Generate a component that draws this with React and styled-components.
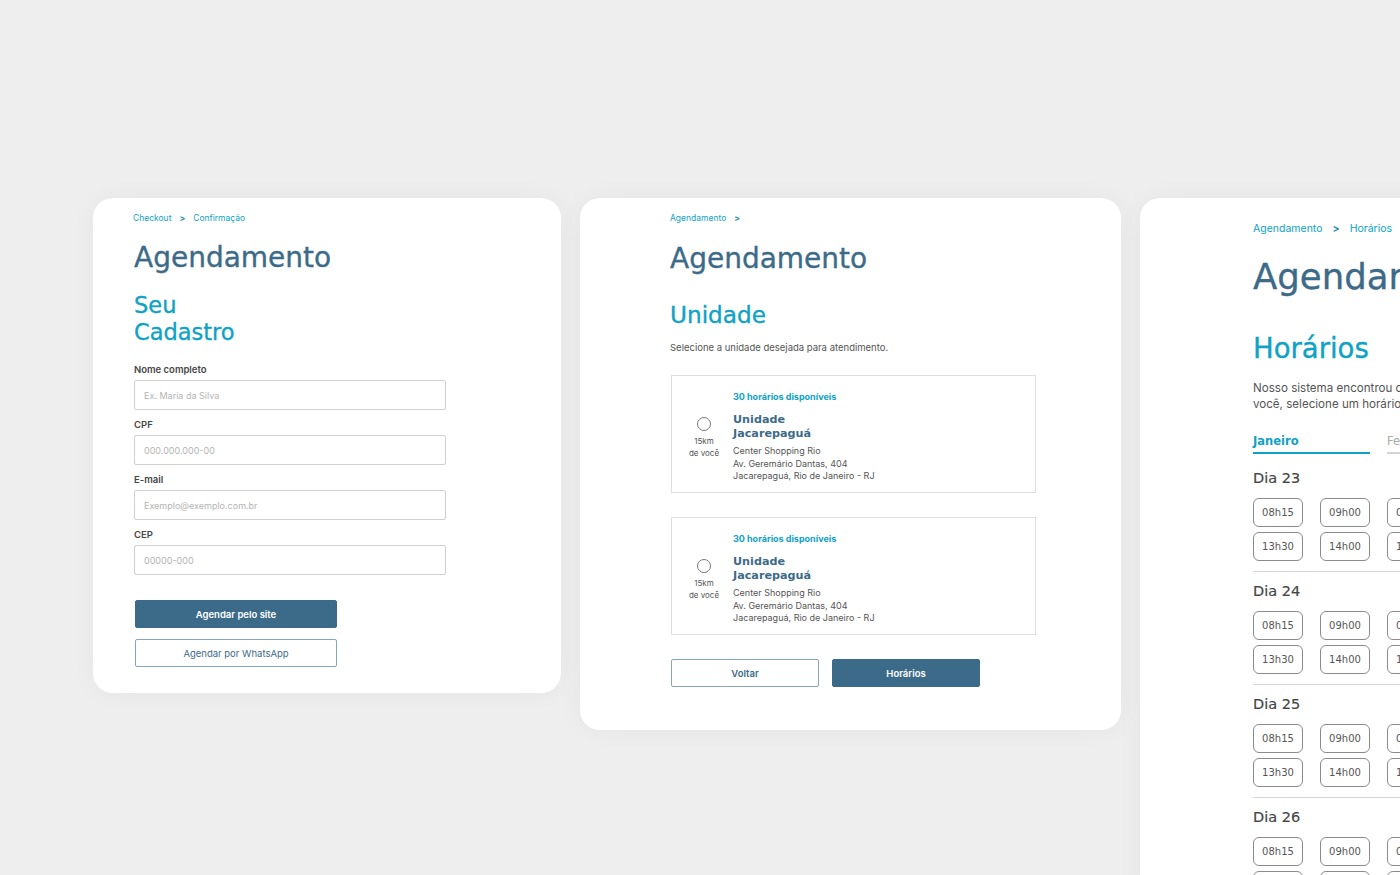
import React from "react";
import styled, { createGlobalStyle } from "styled-components";

const GlobalStyle = createGlobalStyle`
  html, body { margin: 0; padding: 0; }
  body {
    background: #eeeeee;
    overflow: hidden;
    font-family: Inter, "Liberation Sans", sans-serif;
    -webkit-font-smoothing: antialiased;
  }
`;

const DARK = "#3c6b89";
const CYAN = "#0ea2c5";
const HEAD = `"DejaVu Sans", Inter, sans-serif`;

const Page = styled.main`
  display: flex;
  align-items: flex-start;
  gap: 19px;
  padding: 198px 0 0 93px;
  width: max-content;
`;

const Card = styled.section`
  flex-shrink: 0;
  box-sizing: border-box;
  width: ${(p) => p.$w}px;
  min-height: ${(p) => p.$minH || 0}px;
  padding: ${(p) => p.$pad};
  background: #ffffff;
  border-radius: 20px;
  box-shadow: 0 0 26px rgba(0, 0, 0, 0.045);
`;

const Crumbs = styled.nav`
  display: flex;
  align-items: center;
  gap: ${(p) => p.$gap}px;
  font-size: ${(p) => p.$size}px;
  line-height: ${(p) => p.$lh}px;
  color: ${CYAN};
`;

const Sep = styled.span`
  font-weight: 700;
  color: #1f8fb0;
`;

const Title = styled.h1`
  margin: ${(p) => p.$mt}px 0 0 ${(p) => p.$ml || 0}px;
  font-family: ${HEAD};
  font-weight: 400;
  font-size: ${(p) => p.$size}px;
  line-height: ${(p) => p.$lh}px;
  color: ${DARK};
  -webkit-text-stroke: 0.35px ${DARK};
  white-space: nowrap;
`;

const Subtitle = styled.h2`
  margin: ${(p) => p.$mt}px 0 0 ${(p) => p.$ml || 0}px;
  font-family: ${HEAD};
  font-weight: 400;
  font-size: ${(p) => p.$size}px;
  line-height: ${(p) => p.$lh}px;
  color: ${CYAN};
  -webkit-text-stroke: 0.35px ${CYAN};
  white-space: nowrap;
`;

const Form = styled.form`
  display: flex;
  flex-direction: column;
  gap: 9px;
  margin: 18px 0 0 1px;
`;

const Field = styled.label`
  display: flex;
  flex-direction: column;
  gap: 4px;
`;

const LabelText = styled.span`
  font-size: 9.5px;
  line-height: 12px;
  font-weight: 600;
  color: #454545;
`;

const Input = styled.input`
  box-sizing: border-box;
  width: 312px;
  height: 30px;
  padding: 0 9px;
  border: 1px solid #d0d0d0;
  border-radius: 2px;
  font-family: Inter, sans-serif;
  font-size: 9px;
  color: #444;
  outline: none;
  &::placeholder { color: #b4b4b4; }
`;

const Actions = styled.div`
  display: flex;
  flex-direction: ${(p) => p.$dir || "row"};
  gap: ${(p) => p.$gap}px;
  margin-top: ${(p) => p.$mt}px;
  margin-left: ${(p) => p.$ml || 0}px;
`;

const Button = styled.button`
  box-sizing: border-box;
  width: ${(p) => p.$w}px;
  height: 28px;
  border-radius: 2px;
  font-family: Inter, sans-serif;
  font-size: 9.5px;
  font-weight: ${(p) => (p.$bold ? 600 : 400)};
  cursor: pointer;
  background: ${(p) => (p.$primary ? DARK : "#ffffff")};
  color: ${(p) => (p.$primary ? "#ffffff" : DARK)};
  border: 1px solid ${(p) => (p.$primary ? DARK : "#86a6ba")};
`;

const Lead = styled.p`
  margin: ${(p) => p.$mt}px 0 0;
  font-size: ${(p) => p.$size}px;
  line-height: ${(p) => p.$lh}px;
  color: #555;
  white-space: nowrap;
`;

const UnitList = styled.div`
  display: flex;
  flex-direction: column;
  gap: 24px;
  margin: 21px 0 0 1px;
`;

const Unit = styled.div`
  box-sizing: border-box;
  display: flex;
  align-items: flex-start;
  gap: 9px;
  width: 365px;
  height: 118px;
  padding-left: 12px;
  border: 1px solid #dedede;
`;

const Distance = styled.div`
  width: 40px;
  padding-top: 41px;
  display: flex;
  flex-direction: column;
  align-items: center;
  font-size: 8px;
  line-height: 12px;
  color: #555;
  text-align: center;
`;

const Radio = styled.span`
  box-sizing: border-box;
  width: 14px;
  height: 14px;
  margin-bottom: 4px;
  border: 1px solid #7a7a7a;
  border-radius: 50%;
`;

const UnitInfo = styled.div`
  display: flex;
  flex-direction: column;
  padding-top: 15px;
`;

const Slots = styled.span`
  font-size: 9px;
  line-height: 12px;
  font-weight: 700;
  color: ${CYAN};
`;

const UnitName = styled.h3`
  margin: 10px 0 0;
  font-family: ${HEAD};
  font-weight: 700;
  font-size: 11.2px;
  line-height: 13.5px;
  color: ${DARK};
`;

const Address = styled.p`
  margin: 5px 0 0;
  font-size: 9px;
  line-height: 12.5px;
  color: #555;
`;

const Tabs = styled.div`
  display: flex;
  gap: 17px;
  margin-top: 21px;
`;

const Tab = styled.div`
  width: 117px;
  padding-bottom: 3px;
  font-family: ${HEAD};
  font-weight: ${(p) => (p.$active ? 700 : 400)};
  font-size: 11.5px;
  line-height: 16px;
  color: ${(p) => (p.$active ? CYAN : "#aaaaaa")};
  border-bottom: 2px solid ${(p) => (p.$active ? CYAN : "#d4d4d4")};
  white-space: nowrap;
`;

const Day = styled.div`
  display: flex;
  flex-direction: column;
  padding-top: ${(p) => (p.$first ? 14 : 9)}px;
  padding-bottom: 10px;
  border-bottom: 1px solid #d6d6d6;
`;

const DayTitle = styled.h4`
  margin: 0;
  font-family: ${HEAD};
  font-weight: 400;
  font-size: 14.5px;
  line-height: 20px;
  color: #454545;
  -webkit-text-stroke: 0.2px #454545;
`;

const SlotGrid = styled.div`
  display: grid;
  grid-template-columns: repeat(4, 50px);
  column-gap: 17px;
  row-gap: 5px;
  margin-top: 10px;
`;

const Slot = styled.button`
  box-sizing: border-box;
  height: 29px;
  padding: 0;
  background: #fff;
  border: 1px solid #8a8a8a;
  border-radius: 6px;
  font-family: ${HEAD};
  font-size: 10px;
  color: #555;
`;

const times = ["08h15", "09h00", "09h30", "10h00", "13h30", "14h00", "14h30", "15h00"];
const days = ["Dia 23", "Dia 24", "Dia 25", "Dia 26"];

function UnitCard() {
  return (
    <Unit>
      <Distance>
        <Radio />
        <span>15km</span>
        <span>de você</span>
      </Distance>
      <UnitInfo>
        <Slots>30 horários disponíveis</Slots>
        <UnitName>
          Unidade
          <br />
          Jacarepaguá
        </UnitName>
        <Address>
          Center Shopping Rio
          <br />
          Av. Geremário Dantas, 404
          <br />
          Jacarepaguá, Rio de Janeiro - RJ
        </Address>
      </UnitInfo>
    </Unit>
  );
}

export default function App() {
  return (
    <>
      <GlobalStyle />
      <Page>
        <Card $w={468} $pad="14px 0 26px 40px">
          <Crumbs $size={8.5} $lh={12} $gap={8}>
            <span>Checkout</span>
            <Sep>&gt;</Sep>
            <span>Confirmação</span>
          </Crumbs>
          <Title $mt={17} $ml={1} $size={28} $lh={34}>Agendamento</Title>
          <Subtitle $mt={17} $ml={1} $size={22.5} $lh={27}>
            Seu
            <br />
            Cadastro
          </Subtitle>
          <Form>
            <Field>
              <LabelText>Nome completo</LabelText>
              <Input placeholder="Ex. Maria da Silva" />
            </Field>
            <Field>
              <LabelText>CPF</LabelText>
              <Input placeholder="000.000.000-00" />
            </Field>
            <Field>
              <LabelText>E-mail</LabelText>
              <Input placeholder="Exemplo@exemplo.com.br" />
            </Field>
            <Field>
              <LabelText>CEP</LabelText>
              <Input placeholder="00000-000" />
            </Field>
          </Form>
          <Actions $dir="column" $gap={11} $mt={25} $ml={2}>
            <Button type="button" $primary $bold $w={202}>Agendar pelo site</Button>
            <Button type="button" $w={202}>Agendar por WhatsApp</Button>
          </Actions>
        </Card>

        <Card $w={541} $pad="14px 0 43px 90px">
          <Crumbs $size={8.5} $lh={12} $gap={8}>
            <span>Agendamento</span>
            <Sep>&gt;</Sep>
          </Crumbs>
          <Title $mt={18} $size={28} $lh={34}>Agendamento</Title>
          <Subtitle $mt={25} $size={23.2} $lh={28}>Unidade</Subtitle>
          <Lead $mt={13} $size={9.5} $lh={12}>
            Selecione a unidade desejada para atendimento.
          </Lead>
          <UnitList>
            <UnitCard />
            <UnitCard />
          </UnitList>
          <Actions $gap={13} $mt={24} $ml={1}>
            <Button type="button" $bold $w={148}>Voltar</Button>
            <Button type="button" $primary $bold $w={148}>Horários</Button>
          </Actions>
        </Card>

        <Card $w={560} $minH={700} $pad="24px 0 0 113px">
          <Crumbs $size={10.5} $lh={14} $gap={10}>
            <span>Agendamento</span>
            <Sep>&gt;</Sep>
            <span>Horários</span>
          </Crumbs>
          <Title $mt={20} $size={35.5} $lh={42}>Agendamento</Title>
          <Subtitle $mt={33} $size={27.5} $lh={34}>Horários</Subtitle>
          <Lead $mt={15} $size={11.6} $lh={16}>
            Nosso sistema encontrou os horários disponíveis para
            <br />
            você, selecione um horário para continuar.
          </Lead>
          <Tabs>
            <Tab $active>Janeiro</Tab>
            <Tab>Fevereiro</Tab>
          </Tabs>
          {days.map((d, i) => (
            <Day key={d} $first={i === 0}>
              <DayTitle>{d}</DayTitle>
              <SlotGrid>
                {times.map((t) => (
                  <Slot key={t} type="button">{t}</Slot>
                ))}
              </SlotGrid>
            </Day>
          ))}
        </Card>
      </Page>
    </>
  );
}
